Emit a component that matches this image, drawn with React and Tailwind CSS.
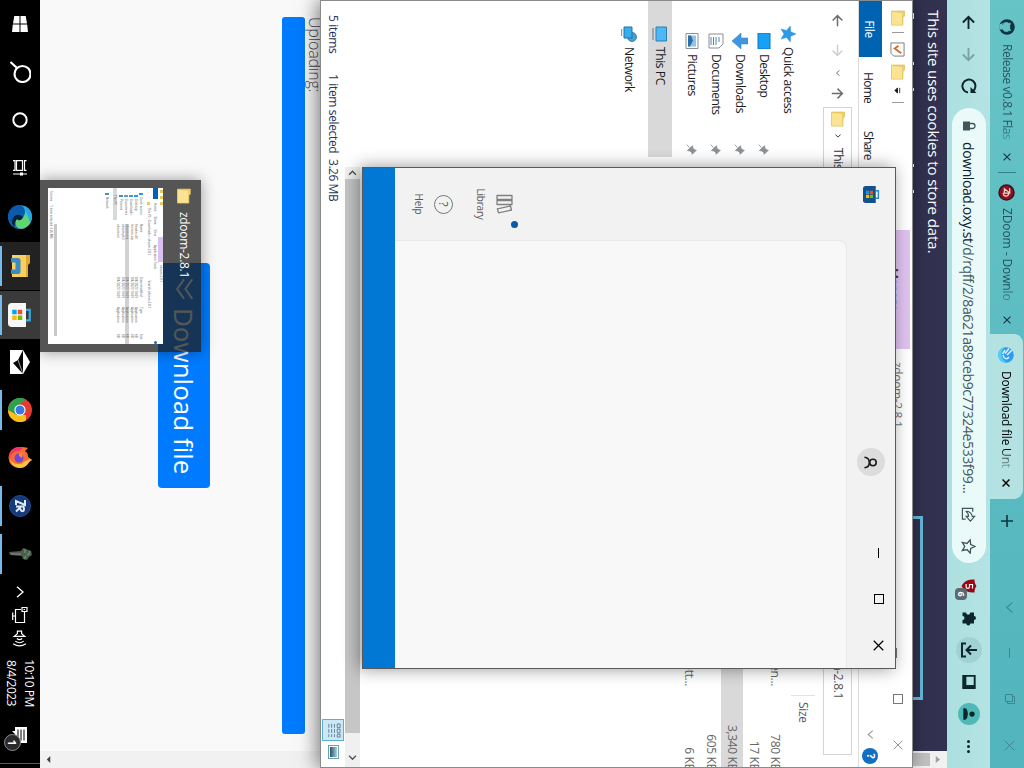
import React from "react";

const UI = "font-['Open_Sans','Noto_Sans',sans-serif]";

function Glyph({ size = 16, box = 16, children, className = "" }) {
  return (
    <svg
      width={size}
      height={size}
      viewBox={`0 0 ${box} ${box}`}
      fill="none"
      stroke="currentColor"
      className={`block shrink-0 ${className}`}
    >
      {children}
    </svg>
  );
}

function Folder({ size = 16 }) {
  return (
    <Glyph size={size}>
      <path d="M1 1.500h5l1.500 1.500H15v11.500H1z" fill="#f0cf63" stroke="#d9b84e" strokeWidth=".6" />
      <path d="M2.500 3.500H15v11H1.500z" fill="#fbe394" stroke="#e0c060" strokeWidth=".5" />
    </Glyph>
  );
}

function Cross({ size = 8, width = 1.4 }) {
  return (
    <Glyph size={size} box={10}>
      <path d="M.7.700l8.600 8.600M9.300.700L.7 9.300" strokeWidth={width} />
    </Glyph>
  );
}

function Arrow({ size = 14, width = 1.8, className = "" }) {
  return (
    <Glyph size={size} className={className}>
      <path d="M15 8H2M8 2L2 8l6 6" strokeWidth={width} />
    </Glyph>
  );
}

function WindowsSquares() {
  return (
    <>
      <path d="M4.500 6.500h3v3h-3z" fill="#f25022" stroke="none" />
      <path d="M8.300 6.500h3v3h-3z" fill="#7fba00" stroke="none" />
      <path d="M4.500 10.200h3v3h-3z" fill="#00a4ef" stroke="none" />
      <path d="M8.300 10.200h3v3h-3z" fill="#ffb900" stroke="none" />
    </>
  );
}

/* ---------- Browser ---------- */

function TabStrip() {
  return (
    <div className="flex h-[34px] items-center bg-gradient-to-r from-[#66c4c6] to-[#52b4bd] text-[12px] text-[#12363f]">
      <div className="flex w-[172px] items-center pl-[19px]">
        <Glyph size={16} className="text-[#0d3440]">
          <circle cx="8" cy="8" r="7.800" fill="#0d3440" stroke="none" />
          <path
            d="M5.800 15.500v-2.600c-1.500.3-2-.6-2.400-1.300M5.800 12c-3-.6-3-4.800-1.500-5.700-.2-.8-.1-1.500.2-2 .8 0 1.500.5 2 .9 1-.2 2-.2 3 0 .5-.4 1.200-.9 2-.9.3.5.4 1.200.2 2 1.500.9 1.500 5.100-1.500 5.700v3.500H5.800z"
            fill="#64c2c5"
            stroke="#64c2c5"
            strokeWidth=".5"
          />
        </Glyph>
        <div className="ml-[9px] w-[98px] whitespace-nowrap tracking-[-0.45px] opacity-80 [mask-image:linear-gradient(to_right,black_82%,rgba(0,0,0,0.2))]">
          Release v0.8.1 Flas
        </div>
        <span className="ml-[11px]">
          <Cross />
        </span>
      </div>
      <div className="h-[18px] w-px bg-[#357f88]" />
      <div className="flex w-[161px] items-center pl-[11px]">
        <Glyph size={17}>
          <circle cx="8" cy="8" r="7" fill="#8f1220" stroke="#3c151b" strokeWidth="1.500" />
          <path d="M4 5h4.500L4.500 10H8M8.500 11V6c4 0 4 5 0 5" stroke="#e9d3c8" strokeWidth="1.200" />
        </Glyph>
        <div className="ml-[7px] w-[98px] whitespace-nowrap tracking-[-0.1px] opacity-80 [mask-image:linear-gradient(to_right,black_80%,rgba(0,0,0,0.2))]">
          ZDoom - Downlo
        </div>
        <span className="ml-[10px]">
          <Cross />
        </span>
      </div>
      <div className="mt-px flex h-[33px] w-[165px] items-center rounded-t-[9px] bg-[#b4e2e2] pl-[13px] text-black">
        <Glyph size={16}>
          <circle cx="8" cy="8" r="7.800" fill="#2f9cf4" stroke="none" />
          <path d="M0 9C4 14 12 14 15.500 7A7.800 7.800 0 0 1 0 9" fill="#4fd0f5" stroke="none" />
          <path d="M3 2l5 5M1.500 5l5 4M3 9l4 2.500M10 5c3 2 2 5-2 6" stroke="#d9f3fb" strokeWidth="1.500" />
        </Glyph>
        <div className="ml-2 w-[98px] whitespace-nowrap tracking-[-0.2px] [mask-image:linear-gradient(to_right,black_78%,rgba(0,0,0,0.2))]">
          Download file Unt
        </div>
        <span className="ml-[10px]">
          <Cross width={1.8} />
        </span>
      </div>
      <div className="flex w-[44px] justify-center">
        <Glyph size={12}>
          <path d="M8 0v16M0 8h16" strokeWidth="2.200" />
        </Glyph>
      </div>
      <div className="ml-auto mb-[6px] flex text-[#3b8790]">
        <div className="flex w-[46px] justify-center">
          <Glyph size={11}>
            <path d="M1 4l7 8 7-8" strokeWidth="1.500" />
          </Glyph>
        </div>
        <div className="flex w-[46px] items-center justify-center">
          <div className="h-px w-[10px] bg-[#3b8790]" />
        </div>
        <div className="flex w-[46px] justify-center">
          <Glyph size={10} box={10}>
            <path d="M.5 2.500h7v7h-7zM2.500 2.500v-2h7v7h-2" />
          </Glyph>
        </div>
        <div className="flex w-[46px] justify-center">
          <Cross size={11} width={0.9} />
        </div>
      </div>
    </div>
  );
}

function ToolButton({ children, className = "" }) {
  return <div className={`flex h-8 w-8 shrink-0 items-center justify-center ${className}`}>{children}</div>;
}

function Toolbar() {
  return (
    <div className="flex h-[43px] items-center bg-gradient-to-b from-[#b5e3e3] to-[#ace0e0] pb-px pl-1.5 text-[#0e252b]">
      <ToolButton>
        <Arrow size={15} width={2} />
      </ToolButton>
      <ToolButton className="text-[#7aa3a5]">
        <Arrow size={15} width={2} className="rotate-180" />
      </ToolButton>
      <ToolButton>
        <Glyph size={16}>
          <path d="M13.500 4.500A6.500 6.500 0 1 0 14.500 9" strokeWidth="2" />
          <path d="M15 .5v6H9z" fill="currentColor" stroke="none" />
        </Glyph>
      </ToolButton>
      <div className="ml-1.5 flex h-[34px] w-[455px] items-center rounded-full bg-[#eafaf9] pl-2.5">
        <Glyph size={16} className="text-[#40565a]">
          <path d="M3.500 7h9v7h-9z" fill="currentColor" stroke="none" />
          <path d="M5.500 7V4.500a2.500 2.500 0 0 1 5 0V7" strokeWidth="1.300" />
        </Glyph>
        <div className="ml-2 w-[352px] whitespace-nowrap text-[14px] tracking-[-0.4px] text-[#45595d]">
          <span className="text-[#0e2227]">download.oxy.st</span>/d/rqff/2/8a621a89ceb9c77324e533f99...
        </div>
        <ToolButton className="ml-1 text-[#41565a]">
          <Glyph size={15}>
            <path d="M5 3.500H1.500v11H13V11" strokeWidth="1.300" />
            <path d="M10 1.500l5 4.500-5 4.500V8C7 8 5.500 9 4.500 11 4.500 7 6.500 4.500 10 4z" strokeWidth="1.200" />
          </Glyph>
        </ToolButton>
        <ToolButton className="text-[#41565a]">
          <Glyph size={15}>
            <path d="M8 1l2.100 4.700 5 .5-3.800 3.400 1.100 5L8 12l-4.400 2.600 1.100-5L.9 6.200l5-.5z" strokeWidth="1.400" />
          </Glyph>
        </ToolButton>
      </div>
      <ToolButton className="relative ml-[7px]">
        <Glyph size={16}>
          <path d="M8 .5c2 1.500 4 2 6.500 2 0 6-1 10-6.500 13C2.500 12.500 1.500 8.500 1.500 2.500 4 2.500 6 2 8 .5z" fill="#9a0712" stroke="none" />
          <path d="M10.500 4.500h-4v3h2.200a1.700 1.700 0 0 1 0 3.400H6" stroke="#fff" strokeWidth="1.200" />
        </Glyph>
        <span className="absolute left-[18px] top-[18px] flex h-3 w-[12px] items-center justify-center rounded-sm bg-[#5d696c] text-[9px] font-bold text-white">
          6
        </span>
      </ToolButton>
      <ToolButton>
        <Glyph size={16}>
          <path
            d="M6 3a2 2 0 0 1 4 0h3.500v3.700a2 2 0 0 1 0 4v3.800H10a2 2 0 0 0-4 0H2.500V11a2 2 0 0 0 0-4.300V3z"
            fill="currentColor"
            stroke="none"
          />
        </Glyph>
      </ToolButton>
      <ToolButton>
        <div className="flex h-[26px] w-[26px] items-center justify-center rounded-full bg-[#a0d2d3]">
          <Glyph size={16}>
            <path d="M8 0v10M3.500 6L8 10.500 12.500 6M1.500 11v4h13v-4" strokeWidth="2" />
          </Glyph>
        </div>
      </ToolButton>
      <ToolButton>
        <Glyph size={14}>
          <path d="M1 1.500h14v13H1z" strokeWidth="2.200" />
          <path d="M12 1.500h3v13h-3zM1 11.500h14v3H1z" fill="currentColor" />
        </Glyph>
      </ToolButton>
      <ToolButton>
        <div className="flex h-[22px] w-[22px] items-center justify-center rounded-full bg-[#4fb9b8]">
          <Glyph size={14}>
            <circle cx="8" cy="4.500" r="3" fill="currentColor" stroke="none" />
            <path d="M1.500 14.500V12C3 8.500 13 8.500 14.500 12v2.500z" fill="currentColor" stroke="none" />
          </Glyph>
        </div>
      </ToolButton>
      <ToolButton className="gap-[2px]">
        <i className="size-[3px] rounded-full bg-current" />
        <i className="size-[3px] rounded-full bg-current" />
        <i className="size-[3px] rounded-full bg-current" />
      </ToolButton>
    </div>
  );
}

function Page() {
  return (
    <div className="flex h-[907px] bg-[#f9f9f9]">
      <div className="flex w-[751px] flex-col">
        <div className="flex h-[150px] justify-between bg-[#323150] pl-[10px] pr-[51px] pt-[2px]">
          <div className="text-[15px] font-medium leading-[22px] tracking-[-0.08px] text-white">
            This site uses cookies to store data.
            <div className="mt-[9px] flex h-[3px] gap-[23px] pl-[3px]">
              <i className="h-[3px] w-1.5 border border-white" />
              <i className="ml-[20px] h-px w-[3px] bg-white" />
              <i className="h-px w-[3px] bg-white" />
              <i className="ml-[50px] h-px w-[3px] bg-white" />
              <i className="h-px w-[3px] bg-white" />
            </div>
          </div>
          <div className="mt-[22px] h-[90px] w-[184px] border-[3px] border-[#64bcdc]" />
        </div>
        <div className="flex flex-1 flex-col pl-[17px] pr-[17px]">
          <div className="mt-[472px] h-[20px] text-[16px] font-light leading-[20px] tracking-[-0.2px] text-[#4b4b55]">Uploading:</div>
          <div className="h-[23px] rounded-[3px] bg-[#007bff]" />
          <div className="mt-[72px] flex h-[52px] w-[225px] items-center self-center rounded-[4px] bg-[#007bff] pl-[15px] text-white">
            <Glyph size={22}>
              <path d="M1 2l7 5 7-5M1 8l7 5 7-5" strokeWidth="1.400" />
            </Glyph>
            <span className="ml-[8px] whitespace-nowrap text-[26px] leading-none tracking-[0px]">Download file</span>
          </div>
        </div>
      </div>
      <div className="flex w-[17px] flex-col items-center bg-[#f1f1f1] pt-[6px] pb-[5px]">
        <Glyph size={7} box={8}>
          <path d="M0 6l4-5 4 5z" fill="#a0a0a0" stroke="none" />
        </Glyph>
        <div className="mt-[4px] h-[320px] w-[13px] bg-[#c1c1c1]" />
        <div className="mt-auto">
          <Glyph size={7} box={8}>
            <path d="M0 2l4 4 4-4z" fill="#404040" stroke="none" />
          </Glyph>
        </div>
      </div>
    </div>
  );
}

/* ---------- File explorer ---------- */

function Pin() {
  return (
    <Glyph size={11} className="ml-auto text-[#8c9296]">
      <path d="M9 1l6 6-2.500.500-2.500 3-.5 3.500L2.500 6.500 6 6l2.500-2.500zM5 11L1 15" fill="currentColor" strokeWidth="1.300" />
    </Glyph>
  );
}

const placeIcons = {
  star: <path d="M8 0l2.200 5.300 5.800.4-4.400 3.700L13 15l-5-3-5 3 1.400-5.600L0 5.700l5.800-.4z" fill="#2b9be8" stroke="#1e86d0" strokeWidth=".4" />,
  desktop: <path d="M0 2h16v12H0z" fill="#18a0f5" stroke="#0b78c0" strokeWidth="1" />,
  downloads: <path d="M5 0h6v7h5l-8 9-8-9h5z" fill="#3f97e0" stroke="#2b7dc6" strokeWidth=".5" />,
  documents: (
    <>
      <path d="M1 1h10l4 4v10H1z" fill="#fff" stroke="#8a8f94" />
      <path d="M4 5h5M4 8h8M4 10.500h8M4 13h8" stroke="#4f86b8" />
    </>
  ),
  pictures: (
    <>
      <path d="M.5 2h15v12H.5z" fill="#fff" stroke="#8a8f94" />
      <path d="M2.500 4h11v8h-11z" fill="#8cc6ec" stroke="none" />
      <path d="M2.500 12V9l5-2 6 3v2z" fill="#2e6ea5" stroke="none" />
    </>
  ),
  pc: (
    <>
      <path d="M1 1.500h14V12H1z" fill="#4fb8f4" stroke="#2c7fb5" />
      <path d="M2 15h12" stroke="#8395a5" strokeWidth="1.400" />
    </>
  ),
  network: (
    <>
      <circle cx="11" cy="5" r="4.500" fill="#4c9ed0" stroke="#3a86b5" />
      <path d="M1 5h11v8H1z" fill="#35aef0" stroke="#2173a6" />
      <path d="M3 15.300h7" stroke="#6d8ca0" />
    </>
  ),
};

function Place({ icon, label, nested, active, className = "" }) {
  return (
    <div
      className={`flex h-6 w-[156px] items-center pr-[2px] ${nested ? "pl-[32px]" : "pl-[25px]"} ${
        active ? "bg-[#d9d9d9]" : ""
      } ${className}`}
    >
      <Glyph size={16}>{placeIcons[icon]}</Glyph>
      <span className="ml-[5px] whitespace-nowrap tracking-[-0.4px]">{label}</span>
      {nested && <Pin />}
    </div>
  );
}

const rows = [
  { type: "Application exten...", size: "780 KB" },
  { type: "", size: "17 KB" },
  { type: "", size: "3,340 KB", selected: true },
  { type: "", size: "605 KB" },
  { type: "Configuration sett...", size: "6 KB" },
];

function Explorer() {
  return (
    <div className="absolute left-0 top-[111px] flex h-[593px] w-[768px] flex-col overflow-hidden border border-[#8a8a8a] bg-white text-[12px] tracking-[-0.35px] text-[#1c1c1c] shadow-[0_3px_18px_rgba(0,0,0,0.5)]">
      <div className="flex h-[30px] items-start pl-[9px]">
        <div className="flex w-[100px] items-center pt-[6px]">
          <Folder />
          <div className="ml-[6px] h-3 w-px bg-[#999]" />
          <span className="ml-[9px]">
            <Glyph size={15}>
              <path d="M1 1h14v11l-3 3H1z" fill="#fff" stroke="#777" />
              <path d="M4 7l3 4 5-7" stroke="#d06b2c" strokeWidth="2" />
            </Glyph>
          </span>
          <span className="ml-[7px]">
            <Folder />
          </span>
          <Glyph size={7} box={8} className="ml-[7px]">
            <path d="M1 4h6L4 7zM1 1.500h6" fill="#111" stroke="#111" strokeWidth=".9" />
          </Glyph>
          <div className="ml-[8px] h-3 w-px bg-[#999]" />
        </div>
        <div className="ml-[120px] mt-[2px] h-[28px] w-[119px] bg-[#e0c2f1] pl-[38px] pt-[9px] leading-[16px]">Manage</div>
        <div className="ml-[13px] mt-[5px] leading-[20px] text-[#777]">zdoom-2.8.1</div>
        <div className="ml-auto flex h-[28px] items-center text-[#777]">
          <div className="flex w-[46px] justify-center">
            <div className="mt-[2px] h-px w-[10px] bg-[#777]" />
          </div>
          <div className="flex w-[46px] justify-center">
            <div className="size-[10px] border border-[#777]" />
          </div>
          <div className="flex w-[45px] justify-center">
            <Cross size={10} width={0.8} />
          </div>
        </div>
      </div>
      <div className="flex h-[24px] items-center border-b border-[#dcdcdc] tracking-[-0.7px]">
        <div className="flex h-[23px] w-[56px] items-center justify-center bg-[#0063b1] pt-[3px] tracking-[-0.35px] text-white">File</div>
        <span className="ml-[15px] w-[59px] pt-[4px]">Home</span>
        <span className="pt-[4px]">Share</span>
        <div className="ml-auto flex items-center pr-[3px] tracking-normal text-[#999]">
          <Glyph size={9}>
            <path d="M1 4l7 8 7-8" strokeWidth="2" />
          </Glyph>
          <div className="ml-[9px] flex size-[16px] items-center justify-center rounded-full bg-[#0f6fc2] text-[11px] font-bold text-white">?</div>
        </div>
      </div>
      <div className="flex h-[40px] items-center pl-[13px] text-[#6b6b6b]">
        <Arrow size={13} />
        <Arrow size={13} className="ml-[17px] rotate-180 text-[#cfcfcf]" />
        <Glyph size={6} className="ml-[13px]">
          <path d="M1 4l7 8 7-8" strokeWidth="2.500" />
        </Glyph>
        <Arrow size={13} className="ml-[11px] rotate-90" />
        <div className="ml-[7px] flex h-[29px] w-[648px] items-center border border-[#d4d4d4] pl-[3px] text-[#333]">
          <Folder />
          <Glyph size={6} className="ml-[6px]">
            <path d="M4 1l7 7-7 7" strokeWidth="2.500" />
          </Glyph>
          <span className="ml-[9px] w-[60px]">This PC</span>
          <span className="ml-[321px] w-[170px] text-right text-[#555]">zdoom-2.8.1</span>
        </div>
      </div>
      <div className="flex min-h-0 flex-1">
        <div className="flex w-[166px] shrink-0 flex-col pt-[18px]">
          <Place icon="star" label="Quick access" />
          <Place icon="desktop" label="Desktop" nested />
          <Place icon="downloads" label="Downloads" nested />
          <Place icon="documents" label="Documents" nested />
          <Place icon="pictures" label="Pictures" nested />
          <Place icon="pc" label="This PC" active className="mt-[8px]" />
          <Place icon="network" label="Network" className="mt-[7px]" />
        </div>
        <div className="flex flex-1 flex-col">
          <div className="mt-[3px] flex h-[24px] items-center justify-end text-[#4c5a70]">
            <span className="flex h-6 w-[72px] items-center border-l border-[#e2e2e2] pl-[6px]">Size</span>
          </div>
          <div className="mt-[5px] flex flex-col text-[#666]">
            {rows.map((row) => (
              <div key={row.size} className={`flex h-[21.500px] items-center ${row.selected ? "bg-[#d9d9d9]" : ""}`}>
                <span className="ml-[400px] w-[119px] whitespace-nowrap text-right">{row.type}</span>
                <span className="-mr-[4px] ml-auto whitespace-nowrap">{row.size}</span>
              </div>
            ))}
          </div>
          <div className="mt-auto flex h-[15px] items-center bg-[#f0f0f0] text-[#505050]">
            <Glyph size={9} className="w-[12px]">
              <path d="M11 2L5 8l6 6" strokeWidth="2.400" />
            </Glyph>
            <div className="h-[15px] w-[554px] bg-[#c6c6c6]" />
            <Glyph size={9} className="ml-auto mr-[5px]">
              <path d="M5 2l6 6-6 6" strokeWidth="2.400" />
            </Glyph>
          </div>
        </div>
      </div>
      <div className="flex h-[24px] shrink-0 items-center pb-px pl-[14px] text-[#25335a]">
        <span className="w-[59px]">5 items</span>
        <span className="w-[85px] whitespace-nowrap">1 item selected</span>
        <span className="tracking-[-0.45px]">3.26 MB</span>
        <div className="ml-auto flex h-[22px] w-[22px] items-center justify-center border border-[#5bb0cf] bg-[#cbe8f6] text-[#5f7f8f]">
          <Glyph size={15}>
            <path d="M1 1h4v3H1zM6.500 1h4v3h-4zM12 1h3v3h-3zM1 7h4M1 10h4M1 13h4M6.500 7h4M6.500 10h4M6.500 13h4M12 7h3M12 10h3M12 13h3" />
          </Glyph>
        </div>
        <div className="ml-[4px] mr-[8px] flex h-[11px] w-[14px] items-center justify-center border border-[#6aa0b8] bg-white">
          <div className="h-[7px] w-[10px] bg-gradient-to-b from-[#a9d4e6] to-[#2d5266]" />
        </div>
      </div>
    </div>
  );
}

/* ---------- Store ---------- */

function Store() {
  return (
    <div className="absolute left-[167px] top-[128px] flex h-[534px] w-[502px] flex-col border border-[#5a5a5a] bg-[#f2f2f2] font-normal shadow-[0_3px_16px_rgba(0,0,0,0.42)]">
      <div className="flex h-[48px] items-start pl-[18px]">
        <div className="mt-[15px]">
          <Glyph size={17}>
            <path d="M4.500 4V1.500h7V4" stroke="#2d86c8" strokeWidth="1.300" />
            <path d="M0 4h16v9.500A2.500 2.500 0 0 1 13.500 16h-11A2.500 2.500 0 0 1 0 13.500z" fill="#14508c" stroke="none" />
            <WindowsSquares />
          </Glyph>
        </div>
        <div className="ml-[245px] mt-[10px] flex size-[28px] items-center justify-center rounded-full bg-[#dcdcdc] text-[#1b1b1b]">
          <Glyph size={13}>
            <circle cx="8" cy="5" r="4" strokeWidth="2" />
            <path d="M1.500 15.500C2 7.500 14 7.500 14.500 15.500" strokeWidth="2" />
          </Glyph>
        </div>
        <div className="ml-auto flex h-[32px] items-center text-black">
          <div className="flex w-[46px] justify-center">
            <div className="h-px w-[10px] bg-black" />
          </div>
          <div className="flex w-[46px] justify-center">
            <div className="size-[10px] border border-black" />
          </div>
          <div className="flex w-[46px] justify-center">
            <Cross size={11} width={1.1} />
          </div>
        </div>
      </div>
      <div className="flex h-[452px]">
        <div className="flex w-[72px] flex-col items-center justify-end pb-[16px] text-[10px] tracking-[-0.2px] text-[#5a5a5a]">
          <div className="relative">
            <Glyph size={20} box={20} className="text-[#808080]">
              <path d="M1.500 3h4v15h-4zM6.500 3h4v15h-4zM12 4.500l4-1 2.800 13-4 1.200z" strokeWidth="1.300" strokeLinejoin="round" />
            </Glyph>
            <span className="absolute -right-[14px] -top-[3px] size-[7px] rounded-full bg-[#0a5aa6]" />
          </div>
          <div className="mt-[6px] leading-[16px]">Library</div>
          <div className="mt-[20px] flex size-[19px] items-center justify-center rounded-full border-[1.500px] border-[#777] text-[12px] leading-none">?</div>
          <div className="mt-[7px] leading-[16px]">Help</div>
        </div>
        <div className="flex-1 rounded-tl-[8px] border-l border-t border-[#e8e8e8] bg-[#f8f8f8]" />
      </div>
      <div className="flex-1 bg-[#0078d4]" />
    </div>
  );
}

/* ---------- Taskbar preview ---------- */

function Preview() {
  return (
    <div className="absolute left-[180px] top-[823px] flex h-[161px] w-[172px] flex-col bg-[rgba(30,30,30,0.75)] px-2 pt-[8px] shadow-[0_0_14px_rgba(0,0,0,0.4)]">
      <div className="flex h-[17px] items-center text-[12px] tracking-[-0.3px] text-white">
        <Folder />
        <span className="ml-2 whitespace-nowrap">zdoom-2.8.1</span>
      </div>
      <div className="mt-[13px] flex h-[115px] flex-col bg-white text-[3px] leading-[4px] text-[#555]">
        <div className="flex h-[5px] items-start">
          <i className="ml-[2px] size-[3px] bg-[#e9c95c]" />
          <i className="ml-[3px] size-[3px] bg-[#e9c95c]" />
          <i className="ml-[3px] size-[3px] bg-[#e9c95c]" />
          <div className="ml-[32px] h-[5px] w-[25px] bg-[#dcc0f0]" />
          <div className="ml-[3px]">zdoom-2.8.1</div>
        </div>
        <div className="flex h-[5px] items-center">
          <i className="h-[5px] w-[11px] bg-[#0063b1]" />
          <span className="ml-[4px]">Home</span>
          <span className="ml-[5px]">Share</span>
          <span className="ml-[5px]">View</span>
          <span className="ml-[9px]">Application Tools</span>
          <i className="ml-auto size-[3px] rounded-full bg-[#0f6fc2]" />
        </div>
        <div className="flex h-[8px] items-center gap-[3px] pl-[3px]">
          <span>&larr;</span>
          <span>&uarr;</span>
          <i className="size-[3px] bg-[#e9c95c]" />
          <span>This PC &rsaquo; Downloads &rsaquo; zdoom-2.8.1</span>
          <span className="ml-[22px]">Search zdoom-2.8.1</span>
        </div>
        <div className="flex pt-[2px]">
          <div className="flex w-[36px] flex-col gap-px">
            <span className="ml-[5px] border-l-2 border-[#2b9be8] pl-[2px]">Quick access</span>
            <span className="ml-[7px] border-l-2 border-[#18a0f5] pl-[2px]">Desktop</span>
            <span className="ml-[7px] border-l-2 border-[#3f97e0] pl-[2px]">Downloads</span>
            <span className="ml-[7px] border-l-2 border-[#5d9ed0] pl-[2px]">Documents</span>
            <span className="ml-[7px] border-l-2 border-[#4d90c0] pl-[2px]">Pictures</span>
            <div className="mt-px w-[32px] bg-[#d9d9d9] pl-[7px]">This PC</div>
            <span className="ml-[5px] mt-[3px] border-l-2 border-[#3f97c0] pl-[2px]">Network</span>
          </div>
          <div className="flex-1">
            <div className="flex">
              <span className="w-[53px]">Name</span>
              <span className="w-[30px]">Date modified</span>
              <span className="w-[27px]">Type</span>
              <span>Size</span>
            </div>
            {["fmodex.dll", "licenses.zip", "zdoom.exe", "zdoom.pk3", "zdoom.ini"].map((name) => (
              <div key={name} className={`mt-[0.500px] flex ${name === "zdoom.exe" ? "bg-[#d2d2d2]" : ""}`}>
                <span className="w-[53px]">{name}</span>
                <span className="w-[30px]">8/4/2023 10:09</span>
                <span className="w-[27px] whitespace-nowrap">Application</span>
                <span>KB</span>
              </div>
            ))}
          </div>
        </div>
        <div className="mt-auto ml-[36px] h-[3px] w-[112px] bg-[#c8c8c8]" />
        <div className="flex h-[6px] items-center gap-[4px] pl-[3px]">
          <span>5 items</span>
          <span>1 item selected 3.26 MB</span>
        </div>
      </div>
    </div>
  );
}

/* ---------- Taskbar ---------- */

function Task({ children, running, className = "" }) {
  return (
    <div className={`flex h-10 w-12 shrink-0 flex-col items-center ${className}`}>
      <div className="flex h-[38px] items-center justify-center pt-[2px]">{children}</div>
      {running && <div className="h-[2px] w-[40px] bg-[#76b9ed]" />}
    </div>
  );
}

function Taskbar() {
  return (
    <div className="absolute left-0 top-[984px] flex h-10 w-[768px] items-center bg-black text-white">
      <Task>
        <Glyph>
          <path d="M0 2.300L7.500 1v6.500H0zM8.500.800L16 0v7.500H8.500zM0 8.500h7.500V15L0 13.700zM8.500 8.500H16V16l-7.500-.8z" fill="#fff" stroke="none" />
        </Glyph>
      </Task>
      <Task>
        <Glyph size={22} box={22}>
          <circle cx="13" cy="8.500" r="8" strokeWidth="2.200" />
          <path d="M7 14L1 20.500" strokeWidth="2.200" />
        </Glyph>
      </Task>
      <Task>
        <Glyph>
          <circle cx="8" cy="8" r="6.700" strokeWidth="2" />
        </Glyph>
      </Task>
      <Task>
        <Glyph size={16}>
          <path d="M.7 1.500V3.500h9.600V1.500M.7 15v-2h9.600v2M.7 5.500h9.600v6H.7zM14 1v14" strokeWidth="1.200" />
          <path d="M12.500 5h3v3h-3z" fill="#fff" stroke="none" />
        </Glyph>
      </Task>
      <Task className="pl-[2px]">
        <Glyph size={24} box={24}>
          <circle cx="12" cy="12" r="12" fill="#1279c9" stroke="none" />
          <path d="M1 8C4-1 18-3 23 7c3 8-5 10-9 8 1-4 0-7-4-7C6 7 2 10 1 15z" fill="#45c8b0" stroke="none" />
          <path d="M1 8C4-1 14-2 19 3 12 2 7 5 1 12z" fill="#26a7e0" stroke="none" />
          <path d="M18 2c6 4 8 12 2 14-3 .6-5 0-6-1 1-6-2-7-4-7 2-4 6-6 8-6z" fill="#62d66e" stroke="none" />
          <path d="M0 12C2 6 9 6 12 9c-5 1-4 9 3 10 4 0 5-1 7-2-4 7-13 9-18 4C1 19 0 16 0 12z" fill="#0c5aae" stroke="none" />
          <path d="M12 9c4 1 4 5 2 6 2 2 5 3 8 2-2 3-6 4-9 2-4-2-5-7-1-10z" fill="#05233f" stroke="none" />
        </Glyph>
      </Task>
      <Task running className="ml-[2px] bg-[#222]">
        <Glyph size={22} box={22}>
          <path d="M0 1h8l2 2h12v4H0z" fill="#e3a72f" stroke="none" />
          <path d="M0 5h22v14H0z" fill="#f9cf62" stroke="none" />
          <path d="M3 20v-7a2.500 2.500 0 0 1 2.500-2.500h11A2.500 2.500 0 0 1 19 13v7h-4.500v-4.500h-7V20z" fill="#3b8bc5" stroke="none" />
        </Glyph>
      </Task>
      <Task running className="ml-px bg-[#3a3a3a]">
        <Glyph size={24}>
          <path d="M4.500 5V1.500h7V5" stroke="#35a9dc" strokeWidth="1.500" />
          <path d="M0 4h16v9.500A2.500 2.500 0 0 1 13.500 16h-11A2.500 2.500 0 0 1 0 13.500z" fill="#f7f7f7" stroke="none" />
          <WindowsSquares />
        </Glyph>
      </Task>
      <Task className="-ml-px">
        <Glyph size={24} box={24}>
          <path d="M0 9L12 2l12 7v13H0z" fill="#fff" stroke="none" />
          <path d="M0 9h24L13 19l-3-5z" fill="#050505" stroke="none" />
          <path d="M10 14l14-5" stroke="#fff" strokeWidth=".6" />
        </Glyph>
      </Task>
      <Task running>
        <Glyph size={24} box={24}>
          <circle cx="12" cy="12" r="12" fill="#e33b2e" stroke="none" />
          <path d="M1.600 6A12 12 0 0 0 12 24l5-9-9.500-1z" fill="#2ca24c" stroke="none" />
          <path d="M22.400 6A12 12 0 0 1 12 24l5-9V6z" fill="#fbc116" stroke="none" />
          <circle cx="12" cy="12" r="5.600" fill="#fff" stroke="none" />
          <circle cx="12" cy="12" r="4.500" fill="#3478e5" stroke="none" />
        </Glyph>
      </Task>
      <Task>
        <Glyph size={24} box={24}>
          <path d="M2 4l3 3c2-3 4-3 6-3 1-2 2-3 3-4 1 4 8 4 8 13a10 10 0 0 1-21 0C1 9 1 6 2 4z" fill="#fb6a31" stroke="none" />
          <path d="M14 0c1 4 8 4 8 13-1 5-4 8-8 9 4-4 6-9 2-14-2-3-3-5-2-8z" fill="#fdc43c" stroke="none" />
          <path d="M1 13c1 7 7 11 13 9-6 0-9-4-9-9L2 9z" fill="#f5316f" stroke="none" />
          <circle cx="12" cy="13" r="4.500" fill="#7446d4" stroke="none" />
          <path d="M6 9l6 1-2 3H7z" fill="#fb8a34" stroke="none" />
        </Glyph>
      </Task>
      <Task running>
        <Glyph size={22} box={22}>
          <circle cx="11" cy="11" r="10.500" fill="#163a78" stroke="#1f4c94" />
          <path d="M5 6h5L6 15h4M11.500 15V7.500c6-2 6 3 1 3.500l4 4" stroke="#dfe8f4" strokeWidth="2" />
        </Glyph>
      </Task>
      <Task running>
        <Glyph size={24} box={24}>
          <path d="M9 1l4-1 2 3 3 2-1 4-3 1-1 12-3 1-1-12-3-2 1-3z" fill="#505a50" stroke="none" />
          <path d="M9 2l3 1 1 2M7 7h4M14 6l3 2" stroke="#4f9b5a" strokeWidth="1.500" />
          <path d="M12 11v10" stroke="#8c8c8c" />
        </Glyph>
      </Task>
      <div className="flex h-10 w-[72px] items-center pl-[2px]">
        <div className="flex w-6 justify-center">
          <Glyph size={12}>
            <path d="M1 12l7-8 7 8" strokeWidth="1.800" />
          </Glyph>
        </div>
        <div className="flex w-6 justify-center">
          <Glyph size={16}>
            <path d="M4 3.500h11.500v9H2.500V7M.5 1h4v5h-4zM2.500 3v1.500M9 12.500V15M5.500 15.300H13" strokeWidth="1.200" />
          </Glyph>
        </div>
        <div className="flex w-6 justify-center">
          <Glyph size={17}>
            <path d="M1 6h2.500L6 3v10l-2.500-3H1zM8 5.500q2 2.500 0 5M10.500 4q3 4 0 8M13 2q4 6 0 12" strokeWidth="1.100" />
          </Glyph>
        </div>
      </div>
      <div className="ml-[7px] flex w-[52px] flex-col items-center text-[12px] leading-[18px] tracking-[-0.5px]">
        <span className="whitespace-nowrap">10:10 PM</span>
        <span className="whitespace-nowrap">8/4/2023</span>
      </div>
      <div className="relative ml-[18px]">
        <Glyph size={16}>
          <path d="M0 1h16v12H7l-3 3v-3H0z" fill="#fff" stroke="none" />
          <path d="M2.500 4h11M2.500 7h11M2.500 10h11" stroke="#000" />
        </Glyph>
        <span className="absolute left-[7px] top-[7px] flex size-[17px] items-center justify-center rounded-full border border-[#8b8b8b] bg-[#2b2b2b] text-[10px] font-bold leading-none">
          1
        </span>
      </div>
      <div className="ml-auto mr-[4px] h-10 w-px bg-[#5a5a5a]" />
    </div>
  );
}

export default function App() {
  return (
    <div className="relative h-screen w-screen overflow-hidden bg-black">
      <div className={`absolute left-full top-0 h-[1024px] w-[768px] origin-top-left rotate-90 overflow-hidden ${UI}`}>
        <TabStrip />
        <Toolbar />
        <Page />
        <Explorer />
        <Store />
        <Preview />
        <Taskbar />
      </div>
    </div>
  );
}
